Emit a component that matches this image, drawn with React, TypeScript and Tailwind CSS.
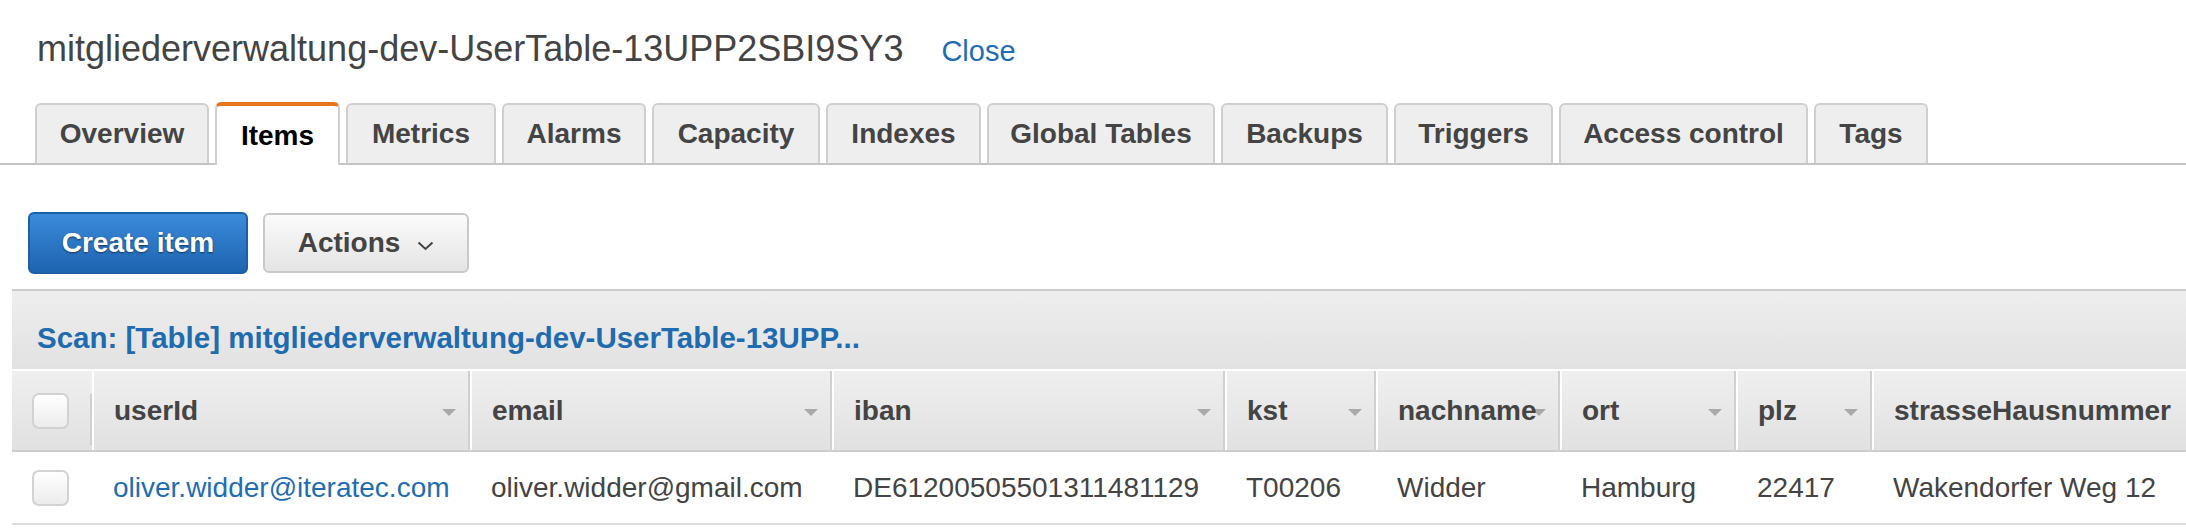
import React from "react";

const tabs = [
  { label: "Overview", w: "w-[174px]" },
  { label: "Items", w: "w-[125px]", active: true },
  { label: "Metrics", w: "w-[150px]" },
  { label: "Alarms", w: "w-[144px]" },
  { label: "Capacity", w: "w-[168px]" },
  { label: "Indexes", w: "w-[155px]" },
  { label: "Global Tables", w: "w-[228px]" },
  { label: "Backups", w: "w-[167px]" },
  { label: "Triggers", w: "w-[159px]" },
  { label: "Access control", w: "w-[249px]" },
  { label: "Tags", w: "w-[114px]" },
];

const columns = [
  { key: "userId", w: "w-[378px]", value: "oliver.widder@iteratec.com", link: true },
  { key: "email", w: "w-[362px]", value: "oliver.widder@gmail.com" },
  { key: "iban", w: "w-[393px]", value: "DE61200505501311481129" },
  { key: "kst", w: "w-[151px]", value: "T00206" },
  { key: "nachname", w: "w-[184px]", value: "Widder" },
  { key: "ort", w: "w-[176px]", value: "Hamburg" },
  { key: "plz", w: "w-[136px]", value: "22417" },
  { key: "strasseHausnummer", w: "w-[420px]", value: "Wakendorfer Weg 12", noSort: true },
];

function Checkbox() {
  return (
    <div className="w-[37px] h-[36px] rounded-[7px] border-2 border-[#d2d2d2] bg-gradient-to-b from-white to-[#ececec]" />
  );
}

function SortArrow() {
  return (
    <div className="absolute right-[12px] top-[38px] w-0 h-0 border-l-[7px] border-r-[7px] border-t-[7px] border-l-transparent border-r-transparent border-t-[#a9a9a9]" />
  );
}

export default function App() {
  return (
    <div className="w-[2186px] h-[532px] overflow-hidden bg-white font-['Liberation_Sans',Arial,sans-serif] text-[#444]">
      {/* title */}
      <div className="flex items-baseline pl-[37px] pt-[28px] leading-[42px]">
        <h1 className="text-[36px] text-[#444]">mitgliederverwaltung-dev-UserTable-13UPP2SBI9SY3</h1>
        <a className="ml-[38px] text-[29px] text-[#1f6db5]">Close</a>
      </div>

      {/* tabs */}
      <div className="mt-[30px] flex items-end gap-[6px] pl-[35px] border-b-2 border-[#c4c4c4]">
        {tabs.map((t) =>
          t.active ? (
            <div
              key={t.label}
              className={`${t.w} relative -mb-[2px] h-[63px] flex items-center justify-center rounded-t-[6px] border-2 border-b-0 border-[#d0d0d0] border-t-[4px] border-t-[#e8761f] bg-white text-[28px] font-bold text-black`}
            >
              {t.label}
            </div>
          ) : (
            <div
              key={t.label}
              className={`${t.w} h-[60px] flex items-center justify-center rounded-t-[6px] border-2 border-b-0 border-[#cfcfcf] bg-[#eeeeee] text-[28px] font-bold text-[#444]`}
            >
              {t.label}
            </div>
          )
        )}
      </div>

      {/* buttons */}
      <div className="mt-[47px] flex items-center gap-[15px] pl-[28px]">
        <button className="w-[220px] h-[62px] rounded-[6px] border-2 border-[#1b5fa8] bg-gradient-to-b from-[#3b8bdb] to-[#1e64b0] text-[28px] font-bold text-white [text-shadow:0_1px_2px_rgba(0,0,0,0.55)]">
          Create item
        </button>
        <button className="w-[206px] h-[60px] flex items-center justify-center gap-[17px] rounded-[6px] border-2 border-[#c9c9c9] bg-gradient-to-b from-[#fbfbfb] to-[#e4e4e4] text-[28px] font-bold text-[#444]">
          Actions
          <svg width="17" height="10" viewBox="0 0 17 10" className="mt-[6px]">
            <polyline points="1.5,1.5 8.5,8 15.5,1.5" fill="none" stroke="#444" strokeWidth="2" />
          </svg>
        </button>
      </div>

      {/* table panel */}
      <div className="mt-[15px] ml-[12px] border-t-2 border-[#cccccc]">
        <div className="h-[80px] pt-[30px] pl-[25px] border-b-2 border-white bg-gradient-to-b from-[#eeeeee] to-[#e2e2e2] leading-[34px]">
          <span className="text-[29.5px] font-bold text-[#1f6bb0]">
            Scan: [Table] mitgliederverwaltung-dev-UserTable-13UPP...
          </span>
        </div>

        {/* header row */}
        <div className="flex h-[81px] border-b-2 border-[#cdcdcd] bg-gradient-to-b from-[#efefef] to-[#e1e1e1]">
          <div className="w-[82px] shrink-0 flex items-center pl-[20px] border-r-2 border-r-white">
            <Checkbox />
            <div className="ml-auto self-end mb-[5px] w-[2px] h-[51px] bg-[#cfcfcf]" />
          </div>
          {columns.map((c, i) => (
            <div
              key={c.key}
              className={`${i === 0 ? "w-[376px]" : c.w} shrink-0 relative flex items-center ${i === 0 ? "pl-[20px]" : "pl-[20px] border-l-2 border-l-white"} border-r-2 border-r-[#d0d0d0] text-[28px] font-bold text-[#444]`}
            >
              {!c.noSort && <SortArrow />}
              <span className="relative whitespace-nowrap">{c.key}</span>
            </div>
          ))}
        </div>

        {/* data row */}
        <div className="flex h-[73px] border-b-2 border-[#dddddd] bg-white">
          <div className="w-[80px] shrink-0 flex items-center pl-[20px]">
            <Checkbox />
          </div>
          {columns.map((c) => (
            <div
              key={c.key}
              className={`${c.w} shrink-0 flex items-center pl-[21px] text-[28px] whitespace-nowrap ${c.link ? "text-[#1f6db5]" : "text-[#444]"}`}
            >
              {c.value}
            </div>
          ))}
        </div>
      </div>
    </div>
  );
}
